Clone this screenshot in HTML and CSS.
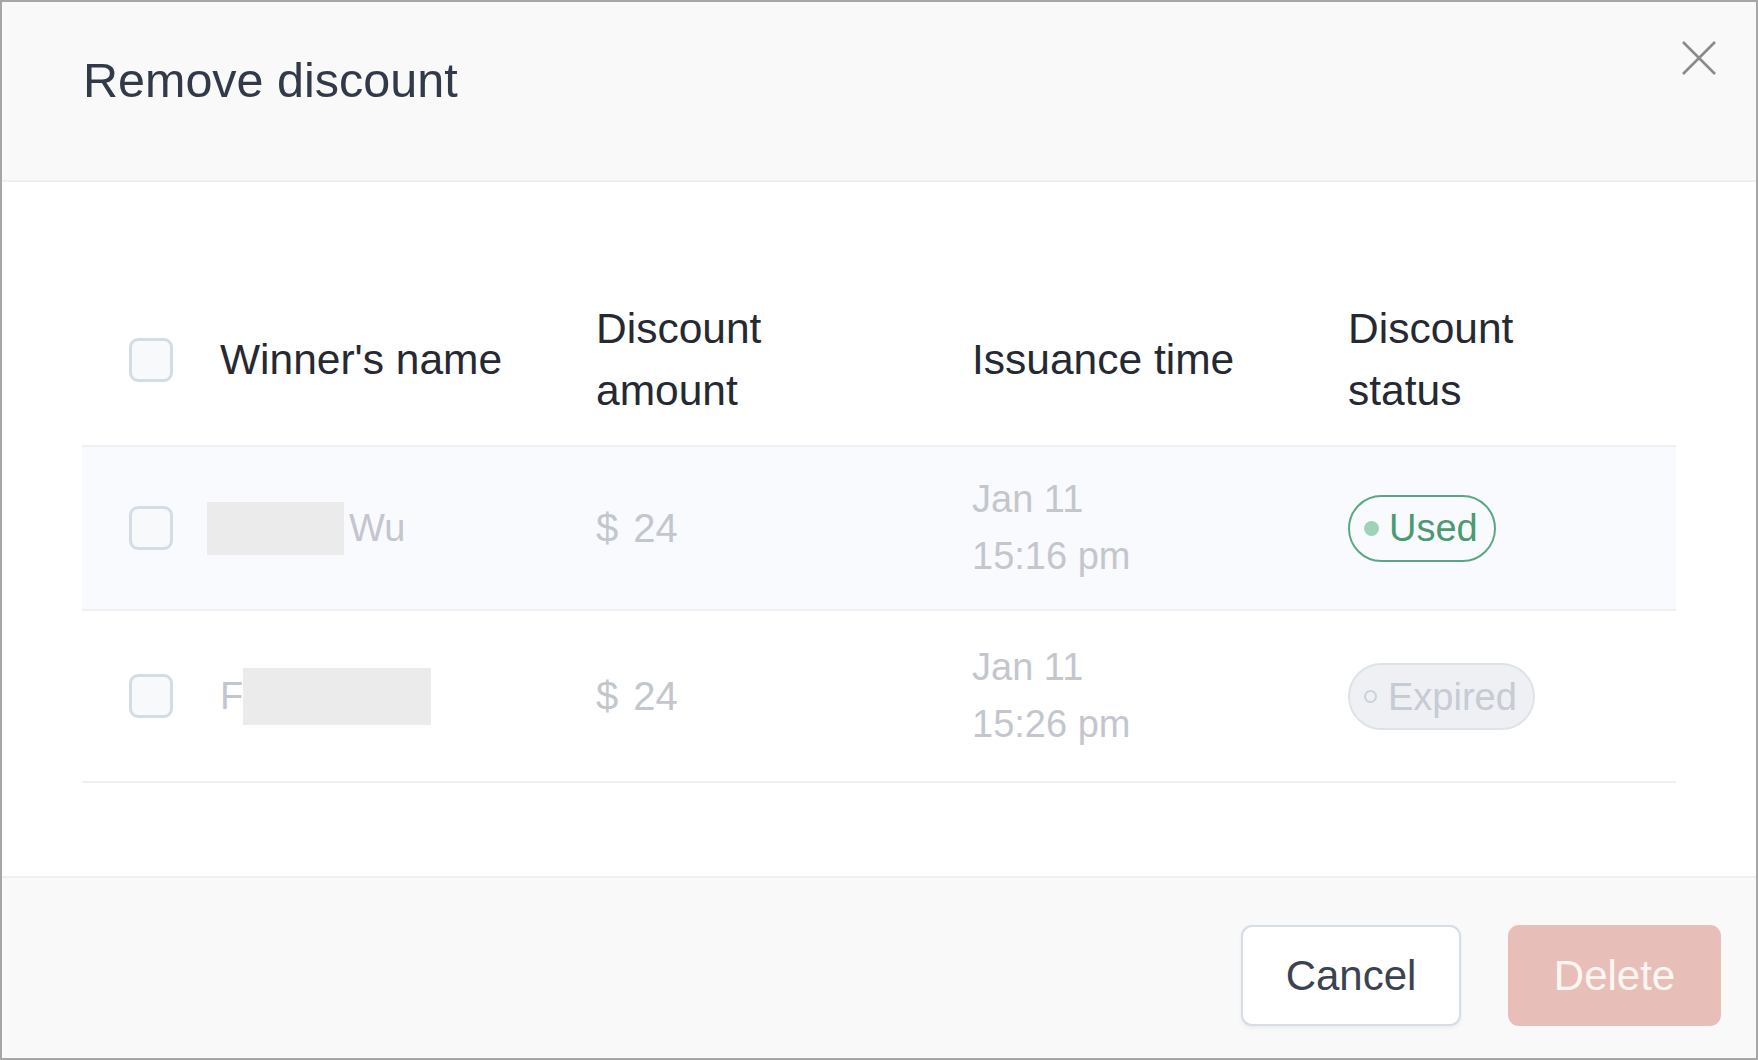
FILE: index.html
```html
<!DOCTYPE html>
<html lang="en">
<head>
    <meta charset="UTF-8">
    <title>Remove discount</title>
    <link rel="stylesheet" href="styles.css">
</head>
<body>
    <div class="modal">
        <header class="modal-header">
            <h1>Remove discount</h1>
            <button class="close" aria-label="Close">
                <svg width="34" height="34" viewBox="0 0 34 34">
                    <path d="M1 1 L33 33 M33 1 L1 33" stroke="#8a8a8a" stroke-width="2.6" fill="none"/>
                </svg>
            </button>
        </header>

        <main class="modal-body">
            <div class="table">
                <div class="row head">
                    <div class="cell"><span class="check"></span></div>
                    <div class="cell">Winner's name</div>
                    <div class="cell">Discount<br>amount</div>
                    <div class="cell">Issuance time</div>
                    <div class="cell">Discount<br>status</div>
                </div>
                <div class="row data shaded">
                    <div class="cell"><span class="check"></span></div>
                    <div class="cell name"><span class="redact first"></span>Wu</div>
                    <div class="cell amount">$ 24</div>
                    <div class="cell">Jan 11<br>15:16 pm</div>
                    <div class="cell"><span class="badge used"><i class="dot"></i>Used</span></div>
                </div>
                <div class="row data tall">
                    <div class="cell"><span class="check"></span></div>
                    <div class="cell name">F<span class="redact last"></span></div>
                    <div class="cell amount">$ 24</div>
                    <div class="cell">Jan 11<br>15:26 pm</div>
                    <div class="cell"><span class="badge expired"><i class="dot"></i>Expired</span></div>
                </div>
            </div>
        </main>

        <footer class="modal-footer">
            <button class="btn cancel">Cancel</button>
            <button class="btn delete">Delete</button>
        </footer>
    </div>
</body>
</html>
```

FILE: styles.css
```css
* {
    margin: 0;
    padding: 0;
    box-sizing: border-box;
    font-family: "Liberation Sans", Arial, sans-serif;
}
body {
    background: #fff;
}
.modal {
    width: 1758px;
    height: 1060px;
    border: 2px solid #a6a6a6;
    display: flex;
    flex-direction: column;
}
.modal-header {
    height: 180px;
    background-color: #f9f9f9;
    border-bottom: 2px solid #efefef;
    display: flex;
    justify-content: space-between;
    align-items: flex-start;
    padding: 0 40px 0 81px;
}
.modal-header h1 {
    margin-top: 48px;
    font-size: 48.5px;
    line-height: 60px;
    font-weight: 400;
    color: #323a49;
}
.close {
    margin-top: 39px;
    background: none;
    border: none;
    width: 34px;
    height: 34px;
    cursor: pointer;
}
.close svg {
    display: block;
}
.modal-body {
    flex: 1;
    padding: 93px 80px 0;
}
.row {
    display: grid;
    grid-template-columns: 138px 376px 376px 376px 1fr;
    align-items: center;
    border-bottom: 2px solid #eef0f3;
}
.row .cell:first-child {
    padding-left: 47px;
}
.head {
    padding: 23px 0;
    font-size: 42.5px;
    line-height: 62px;
    color: #252932;
}
.data {
    padding: 24px 0;
    font-size: 38px;
    line-height: 57px;
    color: #c3c6cd;
}
.data.tall {
    padding: 28px 0;
}
.shaded {
    background-color: #f9fafd;
}
.amount {
    font-size: 40px;
    word-spacing: 4px;
}
.check {
    display: block;
    width: 44px;
    height: 44px;
    border: 3px solid #d4dde5;
    border-radius: 9px;
    background-color: #f7f9fb;
}
.name {
    display: flex;
    align-items: center;
}
.redact {
    display: inline-block;
    background-color: #ebebeb;
}
.redact.first {
    width: 137px;
    height: 53px;
    margin-left: -13px;
    margin-right: 5px;
}
.redact.last {
    width: 188px;
    height: 57px;
}
.badge {
    display: inline-flex;
    align-items: center;
    height: 67px;
    border-radius: 34px;
    padding: 0 16px 0 14px;
    font-size: 38px;
    line-height: 1;
}
.badge .dot {
    width: 15px;
    height: 15px;
    border-radius: 50%;
    margin-right: 10px;
}
.used {
    border: 2.5px solid #5aa883;
    color: #4b9a73;
}
.used .dot {
    background-color: #9fd3b9;
}
.expired {
    border: 2px solid #dfe3e9;
    background-color: #eef0f4;
    color: #c6cbd4;
}
.expired .dot {
    width: 13px;
    height: 13px;
    border: 2px solid #ccd2da;
    margin-right: 11px;
}
.modal-footer {
    height: 182px;
    background-color: #f9f9f9;
    border-top: 2px solid #efefef;
    display: flex;
    justify-content: flex-end;
    align-items: flex-start;
    gap: 47px;
    padding: 47px 35px 0 0;
}
.btn {
    height: 101px;
    border-radius: 11px;
    font-size: 42px;
    cursor: pointer;
}
.cancel {
    width: 220px;
    background-color: #fff;
    border: 2px solid #d6dde4;
    color: #3b4252;
    box-shadow: 0 2px 4px rgba(0, 0, 0, 0.06);
}
.delete {
    width: 213px;
    background-color: #e8bfb8;
    border: none;
    color: #fdf6f4;
}
```
